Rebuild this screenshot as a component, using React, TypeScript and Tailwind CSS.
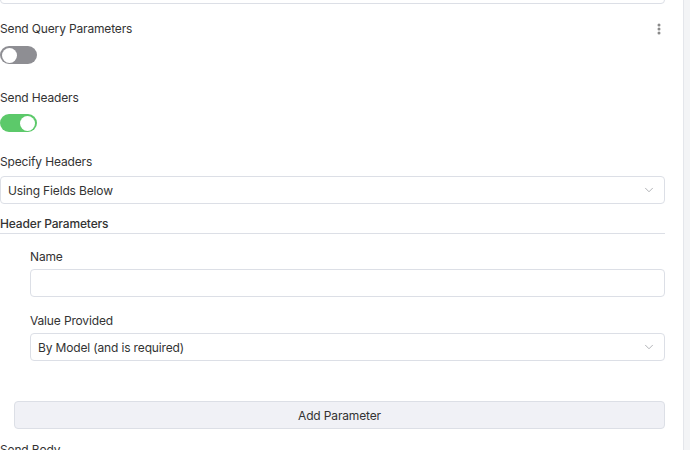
import { ChevronDown } from 'lucide-react'

function Toggle({ on }: { on: boolean }) {
  return (
    <div
      className={
        on
          ? 'flex h-[18px] w-[37px] items-center justify-end rounded-full bg-[#5cc96a] px-[2px]'
          : 'flex h-[18px] w-[37px] items-center justify-start rounded-full bg-[#8e8e93] px-[2px]'
      }
    >
      <div className="h-[15px] w-[15px] rounded-full bg-white" />
    </div>
  )
}

function SelectBox({ value }: { value: string }) {
  return (
    <div className="flex h-[28px] items-center justify-between rounded-[4px] border border-[#dcdfe6] bg-white pl-[7px] pr-[8px]">
      <span className="pt-[1px] text-[12px] text-[#333]">{value}</span>
      <ChevronDown size={14} strokeWidth={1.2} className="text-[#909399]" />
    </div>
  )
}

export default function App() {
  return (
    <div
      className="flex h-[450px] w-[690px] overflow-hidden bg-white text-[12px] leading-[18px] tracking-[-0.15px] text-[#333]"
      style={{ fontFamily: 'Inter, "Noto Sans", sans-serif' }}
    >
      <div className="w-[684px] shrink-0 border-r border-[#e4e6eb]">
        <div className="w-[665px]">
          <div className="-mt-[24px] h-[28px] rounded-[4px] border border-[#dcdfe6]" />

          <div className="mt-[16px] flex items-center justify-between">
            <span>Send Query Parameters</span>
            <svg width="4" height="12" viewBox="0 0 4 12" className="mr-[4px]">
              <circle cx="2" cy="2" r="1.5" fill="#8a8a8a" />
              <circle cx="2" cy="6" r="1.5" fill="#8a8a8a" />
              <circle cx="2" cy="10" r="1.5" fill="#8a8a8a" />
            </svg>
          </div>
          <div className="mt-[8px]">
            <Toggle on={false} />
          </div>

          <div className="mt-[25px]">Send Headers</div>
          <div className="mt-[7px]">
            <Toggle on={true} />
          </div>

          <div className="mt-[21px]">Specify Headers</div>
          <div className="mt-[5px]">
            <SelectBox value="Using Fields Below" />
          </div>

          <div className="mt-[11px] border-b border-[#dcdfe6] font-medium">Header Parameters</div>

          <div className="pl-[30px]">
            <div className="mt-[14px]">Name</div>
            <div className="mt-[3px] h-[28px] rounded-[4px] border border-[#dcdfe6] bg-white" />

            <div className="mt-[15px]">Value Provided</div>
            <div className="mt-[3px]">
              <SelectBox value="By Model (and is required)" />
            </div>
          </div>

          <div className="ml-[14px] mt-[40px] flex h-[28px] items-center justify-center rounded-[4px] border border-[#dcdfe6] bg-[#f0f1f6] pt-[1px] text-[12px]">
            Add Parameter
          </div>

          <div className="mt-[12px]">Send Body</div>
        </div>
      </div>
      <div className="flex-1 bg-[#f3f4f6]" />
    </div>
  )
}
